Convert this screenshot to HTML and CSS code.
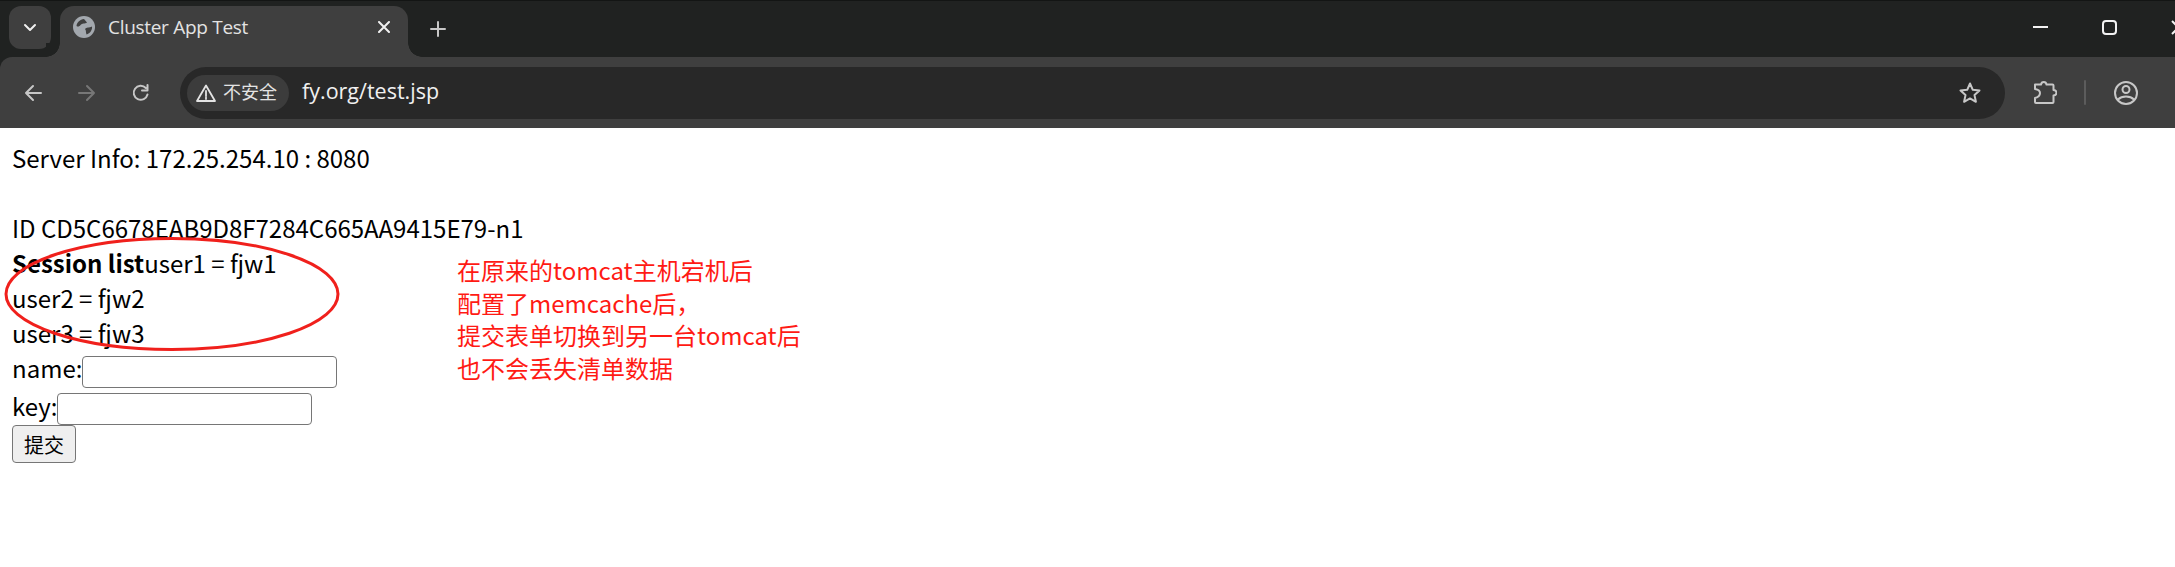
FILE: index.html
```html
<!DOCTYPE html>
<html lang="zh">
<head>
<meta charset="utf-8">
<title>Cluster App Test</title>
<link rel="stylesheet" href="styles.css">
</head>
<body>
<header class="browser">
  <div class="tabstrip">
    <button class="tab-search" aria-label="Tab search">
      <svg width="14" height="9" viewBox="0 0 14 9"><path d="M2 2l5 5 5-5" class="ic-w"/></svg>
    </button>
    <div class="tab">
      <svg class="favicon" width="22" height="22" viewBox="0 0 22 22"><circle cx="11" cy="11" r="11" fill="#a3a8ae"/><path d="M3.500 10C4 6 7 3.500 11 3l3 3.500C12 8 9 7 7.500 9 6.500 10.500 5 11 3.500 10zM19 10.500c.5 3.500-2 7-5.500 8-1-2.500 0-4-1.500-5.500 1.500-2 4-1 7-2.500z" fill="#3f3f3f"/></svg>
      <span class="tab-title">Cluster App Test</span>
      <svg class="tab-close" width="12" height="12" viewBox="0 0 12 12"><path d="M1 1l10 10M11 1 1 11" class="ic-w"/></svg>
    </div>
    <svg class="new-tab" width="16" height="16" viewBox="0 0 16 16"><path d="M8 1v14M1 8h14" class="ic-g"/></svg>
    <div class="win-controls">
      <svg class="win-min" width="15" height="2" viewBox="0 0 15 2"><path d="M0 1h15" class="ic-thin"/></svg>
      <svg class="win-max" width="15" height="15" viewBox="0 0 15 15"><rect x="1" y="1" width="13" height="13" rx="3" class="ic-thin"/></svg>
      <svg class="win-close" width="15" height="15" viewBox="0 0 15 15"><path d="M1 1l13 13M14 1 1 14" class="ic-thin"/></svg>
    </div>
  </div>
  <div class="toolbar">
    <svg class="nav" width="18" height="18" viewBox="0 0 18 18"><path d="M17 9H2M9 2 2 9l7 7" class="ic-g"/></svg>
    <svg class="nav" width="18" height="18" viewBox="0 0 18 18"><path d="M1 9h15M9 2l7 7-7 7" class="ic-dim"/></svg>
    <svg class="nav" width="18" height="18" viewBox="0 0 18 18"><path d="M15.500 10.500A7 7 0 1 1 13.800 4M15.500 1v5.500H10" class="ic-g"/></svg>
    <div class="omnibox">
      <div class="chip">
        <svg width="20" height="18" viewBox="0 0 20 18"><path d="M10 1.500 1 17h18z" class="ic-l"/><path d="M10 7v5M10 13.500v1.500" class="ic-l"/></svg>
        <span class="chip-text">不安全</span>
      </div>
      <span class="url">fy.org/test.jsp</span>
      <svg class="star" width="24" height="24" viewBox="0 0 24 24"><path d="M12 2.500l2.800 6.300 6.700.7-5 4.600 1.400 6.700-5.900-3.400-5.900 3.400 1.400-6.700-5-4.600 6.700-.7z" class="ic-g"/></svg>
    </div>
    <svg class="ext" width="24" height="26" viewBox="0 0 24 26"><path d="M2 4.500h6c.5-3.500 5-3.500 5.500 0h6a1 1 0 0 1 1 1V10c4 .5 4 5 0 5.500V22a1 1 0 0 1-1 1H3a1 1 0 0 1-1-1v-4c4-1 5-3 5-5s-2-3.500-5-4V4.500z" class="ic-g"/></svg>
    <span class="divider"></span>
    <svg class="profile" width="24" height="24" viewBox="0 0 24 24"><circle cx="12" cy="12" r="11" class="ic-g"/><circle cx="12" cy="8.500" r="3.500" class="ic-g"/><path d="M4 18.500c4-4 12-4 16 0" class="ic-g"/></svg>
  </div>
</header>
<main class="page">
  Server Info: 172.25.254.10 : 8080<br><br>
  ID CD5C6678EAB9D8F7284C665AA9415E79-n1<br>
  <b>Session list</b>user1 = fjw1<br>
  user2 = fjw2<br>
  user3 = fjw3<br>
  <form class="form">
    name:<input class="field" type="text"><br>
    key:<input class="field" type="text"><br>
    <button class="submit" type="button">提交</button>
  </form>
  <svg class="circle" width="340" height="124" viewBox="0 0 340 124"><ellipse cx="171" cy="62" rx="166" ry="55.500"/></svg>
  <div class="note">
    <div>在原来的tomcat主机宕机后</div>
    <div>配置了memcache后，</div>
    <div>提交表单切换到另一台tomcat后</div>
    <div>也不会丢失清单数据</div>
  </div>
</main>
</body>
</html>
```
FILE: styles.css
```css
* { box-sizing: border-box; }
html, body { margin: 0; padding: 0; background: #fff; }
body { height: 567px; overflow: hidden; }
svg { display: block; flex: none; fill: none; }
.ic-w, .ic-g, .ic-dim, .ic-l, .ic-thin { fill: none; stroke-linecap: round; stroke-linejoin: round; }
.ic-w { stroke: #f0f0f0; stroke-width: 2; }
.ic-g { stroke: #c7c7c7; stroke-width: 2; }
.ic-dim { stroke: #777; stroke-width: 2; }
.ic-l { stroke: #e3e3e3; stroke-width: 1.800; }
.ic-thin { stroke: #f2f2f2; stroke-width: 2; stroke-linecap: butt; }

.browser { background: #202221; font-family: "Open Sans", "Noto Sans", sans-serif; }
.tabstrip { height: 57px; padding: 6px 0 0 9px; display: flex; align-items: flex-start; border-top: 1px solid #131514; overflow: hidden; }
.tab-search { flex: none; width: 42px; height: 43px; margin: -1px 9px 0 0; padding: 0; border: 0; border-radius: 12px; background: #3f3f3f; display: flex; align-items: center; justify-content: center; }
.tab { flex: none; position: relative; width: 348px; height: 51px; margin-top: -1px; padding: 0 18px 9px 13px; border-radius: 14px 14px 0 0; background: #3f3f3f; display: flex; align-items: center; color: #e3e3e3; }
.tab::before, .tab::after { content: ""; position: absolute; bottom: 0; width: 14px; height: 14px; }
.tab::before { right: 100%; background: radial-gradient(circle at 0 0, #202221 13.500px, #3f3f3f 14px); }
.tab::after { left: 100%; background: radial-gradient(circle at 100% 0, #202221 13.500px, #3f3f3f 14px); }
.favicon { margin-right: 13px; }
.tab-title { flex: 1; font-size: 19px; letter-spacing: -0.3px; white-space: nowrap; }
.new-tab { margin: 14px 0 0 22px; }
.win-controls { flex: none; margin-left: auto; display: flex; align-items: center; width: 142px; height: 42px; margin-top: -1px; }
.win-min { margin-right: 54px; }
.win-max { margin-right: 54px; }

.toolbar { height: 71px; background: #3f3f3f; border-radius: 12px 0 0 0; padding: 0 0 0 24px; display: flex; align-items: center; }
.nav { margin-right: 36px; }
.omnibox { flex: none; width: 1825px; height: 52px; margin: 0 28px 0 -6px; padding: 0 23px 0 7px; border-radius: 26px; background: #282828; display: flex; align-items: center; }
.chip { flex: none; width: 102px; height: 36px; border-radius: 18px; background: #3c3c3c; padding: 0 0 0 9px; display: flex; align-items: center; gap: 7px; color: #e3e3e3; font-size: 18px; font-family: "Noto Sans CJK SC", sans-serif; }
.chip-text { padding-bottom: 4px; }
.url { margin-left: 13px; flex: 1; padding-bottom: 4px; font-size: 21.500px; color: #f0f0f0; }
.ext { margin-right: 27px; }
.divider { width: 2px; height: 25px; background: #5c5c5c; margin-right: 28px; border-radius: 1px; }

.page { position: relative; padding: 12px; font-family: "Noto Sans CJK SC", "Noto Sans", sans-serif; font-size: 24px; color: #000; }
.form { margin: 0; }
.field { width: 255px; height: 32px; margin: 0; padding: 1px 2px; border: 1px solid #767676; border-radius: 4px; background: #fff; font: 20px "Liberation Sans", sans-serif; vertical-align: baseline; }
.submit { width: 64px; height: 38px; padding: 0; border: 1px solid #767676; border-radius: 4px; background: #efefef; color: #000; font: 20px "Noto Sans CJK SC", sans-serif; display: block; }
.circle { position: absolute; left: 1px; top: 104px; }
.circle ellipse { fill: none; stroke: #f0201c; stroke-width: 3; }
.note { position: absolute; left: 457px; top: 126px; color: #ff1a14; font-size: 24px; line-height: 32.500px; font-family: "Noto Sans CJK SC", sans-serif; white-space: nowrap; }
```
